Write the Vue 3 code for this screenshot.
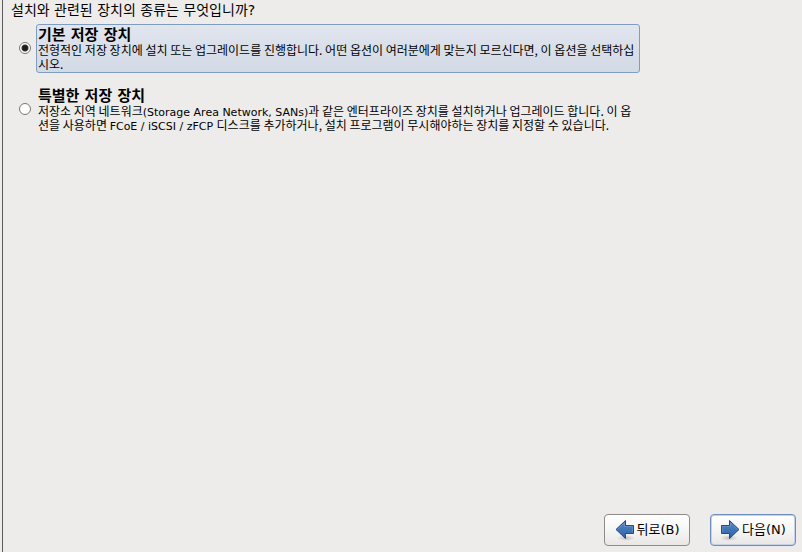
<template>
  <div class="installer">
    <main class="content">
      <h1 id="question" class="question">설치와 관련된 장치의 종류는 무엇입니까?</h1>

      <div class="options" role="radiogroup" aria-labelledby="question">
        <div v-for="option in options" :key="option.id" class="option">
          <input
            :id="option.id"
            v-model="selected"
            type="radio"
            name="storage"
            class="radio"
            :value="option.id"
          />
          <label :for="option.id" class="option-label" :class="{ active: selected === option.id }">
            <strong class="option-title">{{ option.title }}</strong>
            <span class="option-desc">
              <template v-for="(part, i) in option.desc" :key="i"><span v-if="part.latin" class="latin">{{ part.text }}</span><template v-else>{{ part.text }}</template></template>
            </span>
          </label>
        </div>
      </div>
    </main>

    <footer class="actions">
      <button type="button" class="nav-btn">
        <svg class="arrow" viewBox="0 0 20 22" aria-hidden="true">
          <defs>
            <linearGradient id="back-fill" x1="0" y1="0" x2="0" y2="1">
              <stop offset="0" stop-color="#5588c2" />
              <stop offset="1" stop-color="#2f62a5" />
            </linearGradient>
            <radialGradient id="back-shadow">
              <stop offset="0" stop-color="#000" stop-opacity="0.2" />
              <stop offset="1" stop-color="#000" stop-opacity="0" />
            </radialGradient>
          </defs>
          <ellipse cx="11" cy="19" rx="9" ry="3" fill="url(#back-shadow)" />
          <path d="M1 10.500L10.500 1.500V6.500H18.500V14.500H10.500V19.500Z" fill="url(#back-fill)" stroke="#204a87" />
          <path d="M2.500 10.500L9.500 3.900V7.500H17.500V13.500" fill="none" stroke="#83a8d6" stroke-opacity="0.4" />
        </svg>
        <span class="nav-text">뒤로(B)</span>
      </button>
      <button type="button" class="nav-btn primary">
        <svg class="arrow" viewBox="0 0 20 22" aria-hidden="true">
          <defs>
            <linearGradient id="next-fill" x1="0" y1="0" x2="0" y2="1">
              <stop offset="0" stop-color="#5588c2" />
              <stop offset="1" stop-color="#2f62a5" />
            </linearGradient>
            <radialGradient id="next-shadow">
              <stop offset="0" stop-color="#000" stop-opacity="0.2" />
              <stop offset="1" stop-color="#000" stop-opacity="0" />
            </radialGradient>
          </defs>
          <ellipse cx="9" cy="19" rx="9" ry="3" fill="url(#next-shadow)" />
          <path d="M19 10.500L9.500 1.500V6.500H1.500V14.500H9.500V19.500Z" fill="url(#next-fill)" stroke="#204a87" />
          <path d="M2.500 13.500V7.500H10.500V3.900L17.500 10.500" fill="none" stroke="#83a8d6" stroke-opacity="0.4" />
        </svg>
        <span class="nav-text">다음(N)</span>
      </button>
    </footer>
  </div>
</template>

<script setup>
import { ref } from 'vue'

const selected = ref('basic')

const options = [
  {
    id: 'basic',
    title: '기본 저장 장치',
    desc: [
      { text: '전형적인 저장 장치에 설치 또는 업그레이드를 진행합니다. 어떤 옵션이 여러분에게 맞는지 모르신다면, 이 옵션을 선택하십시오.' }
    ]
  },
  {
    id: 'special',
    title: '특별한 저장 장치',
    desc: [
      { text: '저장소 지역 네트워크' },
      { text: '(Storage Area Network, SANs)', latin: true },
      { text: '과 같은 엔터프라이즈 장치를 설치하거나 업그레이드 합니다. 이 옵션을 사용하면 ' },
      { text: 'FCoE / iSCSI / zFCP ', latin: true },
      { text: '디스크를 추가하거나, 설치 프로그램이 무시해야하는 장치를 지정할 수 있습니다.' }
    ]
  }
]
</script>

<style>
body {
  margin: 0;
  background: #edeceb;
}
</style>

<style scoped>
.installer {
  box-sizing: border-box;
  min-height: 100vh;
  margin-left: 2px;
  border-left: 1px solid #5c5c5c;
  display: flex;
  flex-direction: column;
  color: #000;
  font-family: "DejaVu Sans", "Noto Sans CJK KR", sans-serif;
  font-size: 13px;
}

/* === CONTENT === */
.content {
  flex: 1;
  padding: 2px 8px 0;
}
.question {
  margin: 0;
  font-size: 14px;
  font-weight: normal;
  line-height: 16px;
}
.options {
  display: flex;
  flex-direction: column;
  gap: 12px;
  max-width: 629px;
  margin-top: 6px;
}
.option {
  display: flex;
  align-items: center;
  gap: 5px;
  padding-left: 8px;
}

.radio {
  appearance: none;
  box-sizing: border-box;
  flex-shrink: 0;
  width: 12px;
  height: 12px;
  margin: 0 0 2px;
  border: 1px solid #777;
  border-radius: 50%;
  background: #fff;
}
.radio:checked {
  background: radial-gradient(circle, #1c1c1c 0 2px, #333 3px, #fff 4px);
}

.option-label {
  box-sizing: border-box;
  flex: 1;
  padding: 2px 1px 1px;
  border: 1px solid transparent;
  border-radius: 3px;
}
.option-label.active {
  border-color: #7f9dc0;
  background: linear-gradient(#e1e5ee, #d2dae5);
}
.option-title {
  display: block;
  font-size: 15px;
  line-height: 16px;
}
.option-desc {
  display: block;
  font-family: "Noto Sans CJK KR", sans-serif;
  font-size: 12px;
  line-height: 14px;
}
.latin {
  font-family: "DejaVu Sans", sans-serif;
  font-size: 11px;
  line-height: 1;
}

/* === BUTTONS === */
.actions {
  display: flex;
  justify-content: flex-end;
  gap: 20px;
  padding: 6px;
}
.nav-btn {
  box-sizing: border-box;
  display: flex;
  align-items: center;
  justify-content: center;
  gap: 2px;
  min-width: 86px;
  height: 32px;
  padding: 0 8px;
  border: 1px solid #8e8b88;
  border-radius: 4px;
  background: linear-gradient(#fff, #f6f6f5 50%, #e8e7e6);
  color: #000;
  font-family: inherit;
  font-size: 13px;
  white-space: nowrap;
}
.nav-btn.primary {
  border-color: #6f8fba;
  box-shadow: inset 0 0 0 1px #c3d2e6;
}
.nav-btn:active { background: #dcdbda; }
.nav-text { line-height: 16px; }
.arrow {
  width: 20px;
  height: 22px;
}
</style>
